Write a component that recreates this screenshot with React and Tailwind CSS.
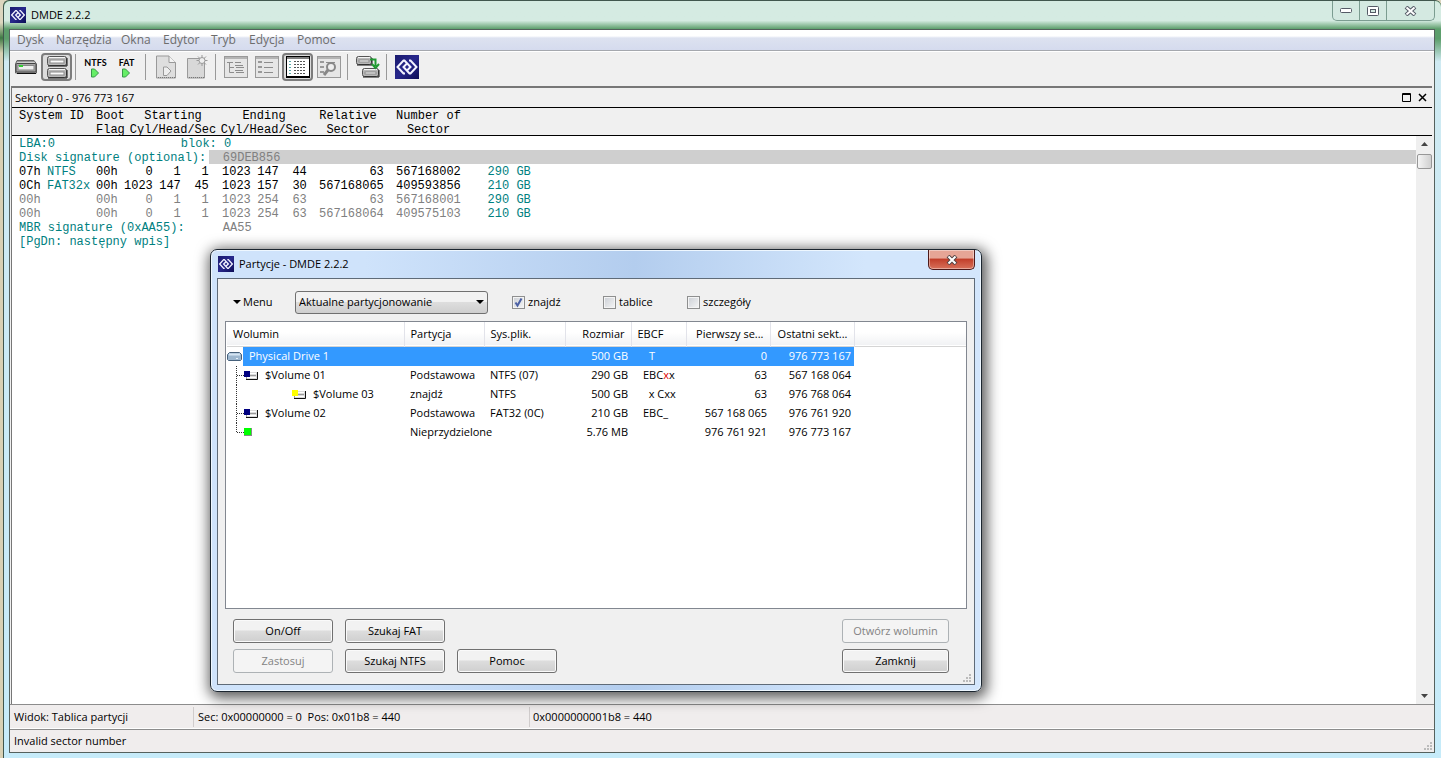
import React from "react";

const menuItems = [
  { label: "Dysk", width: "w-[39px]" },
  { label: "Narzędzia", width: "w-[65px]" },
  { label: "Okna", width: "w-[42px]" },
  { label: "Edytor", width: "w-[48px]" },
  { label: "Tryb", width: "w-[38px]" },
  { label: "Edycja", width: "w-[48px]" },
  { label: "Pomoc", width: "w-[50px]" },
];

const entries = [
  { id: "07h", type: "NTFS", flag: "00h", start: [0, 1, 1], end: [1023, 147, 44], rel: "63", num: "567168002", size: "290 GB" },
  { id: "0Ch", type: "FAT32x", flag: "00h", start: [1023, 147, 45], end: [1023, 157, 30], rel: "567168065", num: "409593856", size: "210 GB" },
  { id: "00h", type: "", flag: "00h", start: [0, 1, 1], end: [1023, 254, 63], rel: "63", num: "567168001", size: "290 GB", dim: true },
  { id: "00h", type: "", flag: "00h", start: [0, 1, 1], end: [1023, 254, 63], rel: "567168064", num: "409575103", size: "210 GB", dim: true },
];

const volumes = [
  { name: "$Volume 01", color: "#000080", part: "Podstawowa", fs: "NTFS (07)", size: "290 GB", flags: ["EBC", "x", "x"], first: "63", last: "567 168 064" },
  { name: "$Volume 03", color: "#ffff00", nested: true, part: "znajdź", fs: "NTFS", size: "500 GB", flags: ["\u00a0 x Cxx"], first: "63", last: "976 768 064" },
  { name: "$Volume 02", color: "#000080", part: "Podstawowa", fs: "FAT32 (0C)", size: "210 GB", flags: ["EBC_"], first: "567 168 065", last: "976 761 920" },
  { name: "", color: "#00ff00", free: true, part: "Nieprzydzielone", fs: "", size: "5.76 MB", flags: [], first: "976 761 921", last: "976 773 167" },
];

const Logo = ({ className }) => (
  <svg viewBox="0 0 24 24" className={className}>
    <defs>
      <linearGradient id="logo" x1="0" y1="0" x2="1" y2="1">
        <stop offset="0" stopColor="#1a1a6e" />
        <stop offset=".5" stopColor="#28288c" />
        <stop offset="1" stopColor="#0c0c55" />
      </linearGradient>
    </defs>
    <rect width="24" height="24" fill="url(#logo)" />
    <g fill="none" stroke="#f4f4ff" strokeWidth="2">
      <path d="M10 18.500 L8.500 18.500 L2.500 12 L8.500 5.500 L9.500 5.500 L15.500 12 L12 15.500" />
      <path d="M14 5.500 L15.500 5.500 L21.500 12 L15.500 18.500 L14.500 18.500 L8.500 12 L12 8.500" />
    </g>
  </svg>
);

const DriveShape = ({ x, y, w = 22, h = 10 }) => (
  <g transform={`translate(${x} ${y})`}>
    <rect x=".5" y=".5" width={w} height={h} rx="2" fill="#b8b8b8" stroke="#555" />
    <path d={`M2 1.500 H${w - 1}`} stroke="#f4f4f4" />
    <rect x="3" y="4" width={w - 5} height={h - 6} fill="#fafafa" stroke="#8a8a8a" />
    <path d={`M1 ${h + 1} H${w + 1} V2`} fill="none" stroke="#111" />
  </g>
);

const DriveIcon = () => (
  <svg width="24" height="16" viewBox="0 0 24 16">
    <path d="M1.500 14 V5 L3 1.500 H20 L22.500 5 V14 Z" fill="#cfcfcf" stroke="#666" />
    <path d="M3 2.500 H20" stroke="#999" />
    <rect x="2" y="4.500" width="20" height="8.500" rx="1" fill="#a8a8a8" stroke="#444" />
    <rect x="4" y="6.500" width="16" height="4.500" fill="#eee" stroke="#888" />
    <rect x="5" y="6" width="4" height="2" fill="#33cc33" />
    <path d="M3 14.500 H22" stroke="#111" strokeWidth="1" />
  </svg>
);

const DrivesIcon = () => (
  <svg width="24" height="24" viewBox="0 0 24 24">
    <DriveShape x="2" y="1" w={19} h={9} />
    <DriveShape x="2" y="13" w={19} h={9} />
  </svg>
);

const FsIcon = ({ label }) => (
  <span className="flex flex-col items-center font-['Lato'] text-[9px] leading-[11px] font-bold text-black">
    {label}
    <svg width="10" height="10" viewBox="0 0 10 10">
      <path d="M1.500 1 H4.500 L8.500 5 L4.500 9 H1.500 Z" fill="#66ee66" stroke="#38984a" />
    </svg>
  </span>
);

const DocIcon = () => (
  <svg width="22" height="24" viewBox="0 0 22 24">
    <path d="M1.500 1 H14 L20.500 7.500 V23 H1.500 Z" fill="#dedede" stroke="#999" />
    <path d="M14 1 V7.500 H20.500" fill="#f4f4f4" stroke="#999" />
    <path d="M8.500 12 H12 L16 16 L12 20.500 H8.500 Z" fill="#eee" stroke="#999" />
    <path d="M3 22.500 H20" stroke="#777" strokeDasharray="1 1" />
  </svg>
);

const NewIcon = () => (
  <svg width="22" height="24" viewBox="0 0 22 24">
    <path d="M1.500 3.500 H18.500 V23 H1.500 Z" fill="#d8d8d8" stroke="#9a9a9a" />
    <path d="M16 0 V11 M10.500 5.500 H21.500 M12 1.500 L20 9.500 M20 1.500 L12 9.500" stroke="#999" />
    <circle cx="16" cy="5.500" r="3" fill="#eee" stroke="#999" />
    <path d="M3 22.500 H18" stroke="#777" strokeDasharray="1 1" />
  </svg>
);

const WindowFrame = ({ active, children }) => (
  <svg width="24" height="24" viewBox="0 0 24 24" className="shrink-0">
    <rect x=".5" y="1.500" width="23" height="21" fill={active ? "#fff" : "#e6e6e6"} stroke={active ? "#000" : "#999"} />
    <path d="M1 3 H23" stroke={active ? "#000" : "#b4b4b4"} strokeWidth={active ? 1 : 2} />
    {active && <path d="M1 22 H23" stroke="#000" strokeWidth="2" />}
    {children}
  </svg>
);

const TreeIcon = () => (
  <WindowFrame>
    <path d="M3 7.500 H9 M5.500 7 V17.500 H10 M5.500 12.500 H10 M11 7.500 H17 M12 12.500 H20 M12 17.500 H20 M11 10.500 H19 M11 15.500 H19" fill="none" stroke="#8c8c8c" />
  </WindowFrame>
);

const ListIcon = () => (
  <WindowFrame>
    <path d="M3 7 H7 M3 12 H7 M3 17 H7" stroke="#999" strokeWidth="2" />
    <path d="M9 7.500 H18 M9 12.500 H18 M9 17.500 H18" stroke="#8c8c8c" />
  </WindowFrame>
);

const HexIcon = () => (
  <WindowFrame active>
    <path d="M4 6 V20" stroke="#55a8a8" strokeWidth="2" strokeDasharray="1 2" />
    <path d="M8 6.500 H20 M8 9.500 H20 M8 12.500 H20 M8 15.500 H20 M8 18.500 H20" stroke="#555" strokeDasharray="2 1" />
  </WindowFrame>
);

const FindIcon = () => (
  <WindowFrame>
    <path d="M3 7 H7 M3 12 H7 M3 17 H7" stroke="#999" strokeWidth="2" />
    <path d="M9 7.500 H18" stroke="#8c8c8c" />
    <circle cx="14" cy="12" r="4" fill="#eee" stroke="#888" strokeWidth="2" />
    <path d="M11 15 L7 20" stroke="#888" strokeWidth="3" />
  </WindowFrame>
);

const CopyDriveIcon = () => (
  <svg width="26" height="24" viewBox="0 0 26 24" className="shrink-0">
    <DriveShape x="1" y="1" w={15} h={8} />
    <DriveShape x="7" y="13" w={16} h={8} />
    <path d="M15 4.500 H20.500 V11 M17 9 L20.500 13 L24 9" fill="none" stroke="#219a32" strokeWidth="2" />
  </svg>
);

const ToolButton = ({ label, active, children }) => (
  <button
    type="button"
    aria-label={label}
    className={
      active
        ? "flex h-7 w-[31px] shrink-0 items-center justify-center rounded-[4px] border-2 border-[#7c7c7c] bg-[#dcdcdc]"
        : "flex h-7 w-[31px] shrink-0 items-center justify-center"
    }
  >
    {children}
  </button>
);

const ToolSeparator = () => <span className="mr-1 ml-[3px] h-[26px] w-px shrink-0 bg-[#999]" />;

const Grip = () => (
  <svg width="10" height="10" viewBox="0 0 10 10" className="shrink-0" fill="#bbb">
    <path d="M7 0h2v2h-2zM4 3h2v2h-2zM7 3h2v2h-2zM1 6h2v2h-2zM4 6h2v2h-2zM7 6h2v2h-2z" />
  </svg>
);

const VolumeIcon = ({ color }) => (
  <svg width="15" height="11" viewBox="0 0 15 11" className="shrink-0">
    <path d="M2 2 H13 V9 H2 Z" fill="#dcdcdc" />
    <path d="M6 3.500 H12 M2 7.500 H12" stroke="#fff" />
    <path d="M6 5.500 H12 M2.500 7 V9" stroke="#999" />
    <path d="M2 9.500 H13.500 V2" fill="none" stroke="#111" />
    <rect x="0" y="1" width="6" height="6" fill={color} />
  </svg>
);

const PushButton = ({ disabled, wide, children }) => (
  <button
    type="button"
    disabled={disabled}
    className={`${wide ? "w-[107px]" : "w-[100px]"} h-6 rounded-[3px] border text-center ${
      disabled
        ? "border-[#adb2b5] bg-[#f4f4f4] text-[#838383]"
        : "border-[#707070] bg-linear-to-b from-[#f2f2f2] from-45% via-[#dddddd] via-50% to-[#cfcfcf] text-black shadow-[inset_0_0_0_1px_#fafafa]"
    }`}
  >
    {children}
  </button>
);

const CheckField = ({ id, label, checked, width }) => (
  <span className={`flex items-center gap-[3px] ${width}`}>
    <span className="relative flex">
      <input
        id={id}
        type="checkbox"
        defaultChecked={checked}
        className="peer size-[13px] appearance-none border border-[#8e8f8f] bg-linear-to-br from-[#cbcfd5] to-[#f6f6f6] shadow-[inset_0_0_0_1px_#f4f4f4]"
      />
      <svg viewBox="0 0 13 13" className="pointer-events-none absolute inset-0 hidden peer-checked:block">
        <path d="M3.500 6.500 L5.500 9.500 L9.500 2.500" fill="none" stroke="#4b60a4" strokeWidth="2" />
      </svg>
    </span>
    <label htmlFor={id}>{label}</label>
  </span>
);

const SectorTable = () => (
  <table className="min-w-0 flex-1 table-fixed border-collapse self-start text-left leading-3 whitespace-pre">
    <colgroup>
      <col className="w-[84px]" />
      <col className="w-[28px]" />
      <col className="w-[28px]" />
      <col className="w-[28px]" />
      <col className="w-[28px]" />
      <col className="w-[42px]" />
      <col className="w-[28px]" />
      <col className="w-[28px]" />
      <col className="w-[77px]" />
      <col className="w-[77px]" />
      <col className="w-[70px]" />
      <col />
    </colgroup>
    <tbody className="[&_td]:p-0 [&_td]:pt-[2px]">
      <tr className="h-[14px] text-[#008080]">
        <td colSpan={4}>
          <span className="pl-[7px]">LBA:0</span>
        </td>
        <td colSpan={8}>blok: 0</td>
      </tr>
      <tr className="h-[14px] text-[#008080]">
        <td colSpan={5}>
          <span className="pl-[7px]">Disk signature (optional):</span>
        </td>
        <td colSpan={7} className="bg-[#cfcfcf] text-[#808080]">
          <span className="pl-[14px]">69DEB856</span>
        </td>
      </tr>
      {entries.map((e, i) => (
        <tr key={i} className={e.dim ? "h-[14px] text-right text-[#808080]" : "h-[14px] text-right text-black"}>
          <td className="text-left">
            <span className="flex pl-[7px]">
              <span className="w-7">{e.id}</span>
              <span className="text-[#008080]">{e.type}</span>
            </span>
          </td>
          <td className="text-left">{e.flag}</td>
          {e.start.map((n, k) => (
            <td key={k}>{n}</td>
          ))}
          {e.end.map((n, k) => (
            <td key={k}>{n}</td>
          ))}
          <td>{e.rel}</td>
          <td>{e.num}</td>
          <td className="text-[#008080]">{e.size}</td>
          <td />
        </tr>
      ))}
      <tr className="h-[14px] text-[#008080]">
        <td colSpan={5}>
          <span className="pl-[7px]">MBR signature (0xAA55):</span>
        </td>
        <td colSpan={7} className="text-[#808080]">
          <span className="pl-[14px]">AA55</span>
        </td>
      </tr>
      <tr className="h-[14px] text-[#008080]">
        <td colSpan={12}>
          <span className="pl-[7px]">[PgDn: następny wpis]</span>
        </td>
      </tr>
    </tbody>
  </table>
);

const VolumeTable = () => (
  <table className="w-full table-fixed border-collapse text-left whitespace-nowrap">
    <colgroup>
      <col className="w-[177px]" />
      <col className="w-[80px]" />
      <col className="w-[81px]" />
      <col className="w-[66px]" />
      <col className="w-[55px]" />
      <col className="w-[84px]" />
      <col className="w-[84px]" />
      <col />
    </colgroup>
    <thead>
      <tr className="h-6 border-b border-[#d5d5d5] bg-linear-to-b from-white from-45% to-[#f1f2f4] [&_th]:border-r [&_th]:border-[#e2e3ea] [&_th]:p-0 [&_th]:px-[6px] [&_th]:font-normal [&_th:last-child]:border-r-0">
        <th>Wolumin</th>
        <th>Partycja</th>
        <th>Sys.plik.</th>
        <th className="text-right">Rozmiar</th>
        <th>EBCF</th>
        <th className="text-right">Pierwszy se...</th>
        <th className="text-right">Ostatni sekt...</th>
        <th />
      </tr>
    </thead>
    <tbody className="[&_td]:p-0">
      <tr className="h-[19px] text-white">
        <td>
          <span className="flex h-[19px] items-center">
            <svg width="16" height="11" viewBox="0 0 16 11" className="shrink-0">
              <path d="M2.500 1.500 H12.500 L14.500 3.500 V8.500 L13.500 9.500 H1.500 L.5 8.500 V3.500 Z" fill="#9db7cf" stroke="#46607a" />
              <path d="M2 3.500 H13" stroke="#d4e4f2" strokeWidth="2" />
              <path d="M9 7.500 H11" stroke="#e4f0fa" />
            </svg>
            <span className="flex h-full flex-1 items-center bg-[#3399ff] pl-[6px]">Physical Drive 1</span>
          </span>
        </td>
        <td className="bg-[#3399ff]" />
        <td className="bg-[#3399ff]" />
        <td className="bg-[#3399ff] text-right"><span className="pr-[3px]">500 GB</span></td>
        <td className="bg-[#3399ff]"><span className="pl-[18px]">T</span></td>
        <td className="bg-[#3399ff] text-right"><span className="pr-[3px]">0</span></td>
        <td className="bg-[#3399ff] text-right"><span className="pr-[3px]">976 773 167</span></td>
        <td />
      </tr>
      {volumes.map((v) => (
        <tr key={v.last + v.part} className="h-[19px]">
          <td>
            <span className="flex h-[19px] items-center">
              <svg width="17" height="19" viewBox="0 0 17 19" className="shrink-0" fill="none" stroke="#333" strokeDasharray="1 1">
                <path d={v.free ? "M9.500 0 V10" : "M9.500 0 V19"} />
                {!v.nested && <path d="M10 9.500 H17" />}
              </svg>
              {v.nested && <span className="w-12 shrink-0" />}
              {v.free ? (
                <span className="size-2 border-r border-b border-[#888] bg-[#00ff00]" />
              ) : (
                <VolumeIcon color={v.color} />
              )}
              <span className="pl-[6px]">{v.name}</span>
            </span>
          </td>
          <td><span className="pl-[6px]">{v.part}</span></td>
          <td><span className="pl-[6px]">{v.fs}</span></td>
          <td className="text-right"><span className="pr-[3px]">{v.size}</span></td>
          <td>
            <span className="pl-3">
              {v.flags.map((f, k) => (
                <span key={k} className={k === 1 ? "text-[#e00000]" : ""}>{f}</span>
              ))}
            </span>
          </td>
          <td className="text-right"><span className="pr-[3px]">{v.first}</span></td>
          <td className="text-right"><span className="pr-[3px]">{v.last}</span></td>
          <td />
        </tr>
      ))}
    </tbody>
  </table>
);

const PartitionsDialog = () => (
  <section
    aria-label="Partycje"
    className="absolute top-[249px] left-[210px] flex h-[443px] w-[772px] flex-col rounded-[7px] border border-[#1c2630] bg-linear-to-r from-[#cfe3fb] from-20% via-[#b3cdee] via-55% to-[#d3e6fc] to-85% px-[6px] pb-[6px] text-black shadow-[inset_0_0_0_1px_#eef7ff,2px_3px_14px_3px_rgba(0,0,0,0.65)]"
  >
    <header className="flex h-7 shrink-0 items-start justify-between">
      <h2 className="flex h-7 items-center gap-[5px] pl-px">
        <Logo className="size-4" />
        Partycje - DMDE 2.2.2
      </h2>
      <button
        type="button"
        aria-label="Zamknij okno"
        className="flex h-5 w-[47px] items-center justify-center rounded-b-[5px] border border-t-0 border-[#4d1a1a] bg-linear-to-b from-[#e6a596] from-40% via-[#c2402c] via-50% to-[#d8705a] shadow-[inset_0_0_0_1px_rgba(255,255,255,0.4)]"
      >
        <svg width="12" height="10" viewBox="0 0 12 10">
          <path d="M2 1 L10 9 M10 1 L2 9" stroke="#544" strokeWidth="4" />
          <path d="M2.500 1.500 L9.500 8.500 M9.500 1.500 L2.500 8.500" stroke="#fff" strokeWidth="2" />
        </svg>
      </button>
    </header>
    <div className="flex min-h-0 flex-1 flex-col border border-[#5f6b78] bg-[#f0f0f0] px-[7px] pt-[11px]">
      <div className="flex h-6 shrink-0 items-center pl-2">
        <button type="button" className="flex w-[62px] items-center gap-[2px]">
          <svg width="8" height="4" viewBox="0 0 8 4">
            <path d="M0 0h8l-4 4z" />
          </svg>
          Menu
        </button>
        <span className="relative mr-6 flex w-[193px] items-center">
          <select
            aria-label="Partycjonowanie"
            className="h-[23px] w-full appearance-none rounded-[3px] border border-[#707070] bg-linear-to-b from-[#f2f2f2] from-45% via-[#dddddd] via-50% to-[#cfcfcf] pl-[3px]"
          >
            <option>Aktualne partycjonowanie</option>
          </select>
          <svg width="8" height="4" viewBox="0 0 8 4" className="pointer-events-none absolute right-1">
            <path d="M0 0h8l-4 4z" />
          </svg>
        </span>
        <CheckField id="find" label="znajdź" checked width="w-[91px]" />
        <CheckField id="tables" label="tablice" width="w-[84px]" />
        <CheckField id="details" label="szczegóły" width="w-[90px]" />
      </div>
      <div className="mt-[7px] h-[288px] shrink-0 border border-[#828790] bg-white pl-px">
        <VolumeTable />
      </div>
      <div className="flex pt-[10px] pr-[10px] pl-2">
        <div className="grid grid-cols-3 gap-x-3 gap-y-[6px]">
          <PushButton>On/Off</PushButton>
          <PushButton>Szukaj FAT</PushButton>
          <span />
          <PushButton disabled>Zastosuj</PushButton>
          <PushButton>Szukaj NTFS</PushButton>
          <PushButton>Pomoc</PushButton>
        </div>
        <div className="mr-2 ml-auto grid gap-y-[6px]">
          <PushButton wide disabled>Otwórz wolumin</PushButton>
          <PushButton wide>Zamknij</PushButton>
        </div>
      </div>
      <div className="-mr-[5px] flex flex-1 items-end justify-end">
        <Grip />
      </div>
    </div>
  </section>
);

const WindowControls = () => (
  <div className="flex h-5 w-[103px] rounded-b-[5px] border border-t-0 border-[#7b9c90] bg-[#d4e9e1]">
    <button type="button" aria-label="Minimalizuj" className="flex flex-1 items-center justify-center border-r border-[#7b9c90]">
      <svg width="12" height="6" viewBox="0 0 12 6">
        <rect x=".5" y=".5" width="11" height="4" rx="1" fill="#fff" stroke="#555a66" />
      </svg>
    </button>
    <button type="button" aria-label="Maksymalizuj" className="flex flex-1 items-center justify-center border-r border-[#7b9c90]">
      <svg width="12" height="10" viewBox="0 0 12 10">
        <rect x=".5" y=".5" width="11" height="9" rx="1" fill="#fff" stroke="#555a66" />
        <rect x="3.500" y="3.500" width="5" height="3" fill="#d4e9e1" stroke="#555a66" />
      </svg>
    </button>
    <button type="button" aria-label="Zamknij" className="flex w-[47px] items-center justify-center">
      <svg width="13" height="10" viewBox="0 0 13 10">
        <path d="M2 1 L11 9 M11 1 L2 9" stroke="#555a66" strokeWidth="4" />
        <path d="M2.500 1.500 L10.500 8.500 M10.500 1.500 L2.500 8.500" stroke="#fff" strokeWidth="2" />
      </svg>
    </button>
  </div>
);

const App = () => {
  return (
    <div className="relative flex h-screen overflow-hidden bg-linear-to-b from-[#dcd6bf] from-3% via-[#3d7a45] via-5% to-[#d8d0b4] to-7% pl-[3px] font-['Open_Sans',sans-serif] text-[11px] leading-4 text-black">
      <main className="flex min-w-0 flex-1 flex-col rounded-t-[6px] border-t border-l border-[#41574e] bg-linear-to-b from-[#5c9e6c] from-5% via-[#cfeaf2] via-8% to-[#c6ebf9] pr-[6px] pb-[5px]">
        <header className="-mr-[6px] flex h-7 shrink-0 items-start justify-between rounded-t-[6px] bg-linear-to-b from-[#d5ebe2] from-70% to-[#5c9e6c] pr-[6px] pl-[6px]">
          <h1 className="flex h-7 items-center gap-[5px]">
            <Logo className="size-4" />
            DMDE 2.2.2
          </h1>
          <WindowControls />
        </header>

        <div className="ml-[5px] flex min-h-0 flex-1 flex-col border border-[#55615d] bg-[#f0f0f0]">
          <nav className="flex h-[21px] shrink-0 items-center border-b border-[#a5a8ae] bg-linear-to-b from-white from-30% via-[#dde2f0] via-40% to-[#d5dbee] pl-[7px] text-xs text-[#6d6d6d]">
            {menuItems.map((m) => (
              <button key={m.label} type="button" className={`${m.width} text-left`}>
                {m.label}
              </button>
            ))}
          </nav>

          <div className="flex h-[35px] shrink-0 items-center border-t border-white pb-1">
            <ToolButton label="Dysk"><DriveIcon /></ToolButton>
            <ToolButton label="Dyski" active><DrivesIcon /></ToolButton>
            <ToolSeparator />
            <ToolButton label="NTFS"><FsIcon label="NTFS" /></ToolButton>
            <ToolButton label="FAT"><FsIcon label="FAT" /></ToolButton>
            <ToolSeparator />
            <ToolButton label="Otwórz"><DocIcon /></ToolButton>
            <ToolButton label="Nowy"><NewIcon /></ToolButton>
            <ToolSeparator />
            <ToolButton label="Drzewo"><TreeIcon /></ToolButton>
            <ToolButton label="Lista"><ListIcon /></ToolButton>
            <ToolButton label="Edytor" active><HexIcon /></ToolButton>
            <ToolButton label="Szukaj"><FindIcon /></ToolButton>
            <ToolSeparator />
            <ToolButton label="Kopiuj"><CopyDriveIcon /></ToolButton>
            <ToolSeparator />
            <ToolButton label="O programie"><Logo className="size-6" /></ToolButton>
          </div>

          <section className="mr-[2px] ml-px flex min-h-0 flex-1 flex-col border-t-2 border-l border-[#777]">
            <div className="flex h-[19px] shrink-0 items-center justify-between pr-[5px] pl-[3px]">
              <h2>Sektory 0 - 976 773 167</h2>
              <span className="flex gap-[7px]">
                <button type="button" aria-label="Powiększ">
                  <svg width="9" height="9" viewBox="0 0 9 9">
                    <path d="M.5 .5 H8.500 V8.500 H.5 Z M0 1.500 H9" fill="none" stroke="#000" />
                  </svg>
                </button>
                <button type="button" aria-label="Zamknij panel">
                  <svg width="9" height="9" viewBox="0 0 9 9">
                    <path d="M1 1 L8 8 M8 1 L1 8" stroke="#000" strokeWidth="1.500" />
                  </svg>
                </button>
              </span>
            </div>
            <div className="flex h-[29px] shrink-0 border-y border-black pt-px pl-[7px] text-center font-['Liberation_Mono',monospace] text-xs leading-[14px] whitespace-nowrap">
              <div className="w-[77px] text-left">System ID</div>
              <div className="flex w-[35px] flex-col text-left">
                <span>Boot</span>
                <span>Flag</span>
              </div>
              <div className="mr-[7px] flex w-[84px] flex-col items-center">
                <span>Starting</span>
                <span>Cyl/Head/Sec</span>
              </div>
              <div className="mr-[14px] flex w-[84px] flex-col items-center">
                <span>Ending</span>
                <span>Cyl/Head/Sec</span>
              </div>
              <div className="mr-[21px] flex w-[56px] flex-col items-center">
                <span>Relative</span>
                <span>Sector</span>
              </div>
              <div className="flex w-[63px] flex-col items-center">
                <span>Number of</span>
                <span>Sector</span>
              </div>
            </div>
            <div className="flex min-h-0 flex-1 bg-white font-['Liberation_Mono',monospace] text-xs leading-[14px]">
              <SectorTable />
              <div className="flex w-4 shrink-0 flex-col items-center bg-[#efefef] py-[6px]">
                <svg width="7" height="4" viewBox="0 0 7 4">
                  <path d="M0 4h7l-3.500-4z" fill="#444" />
                </svg>
                <span className="mt-2 h-[15px] w-[15px] shrink-0 rounded-[2px] border border-[#979797] bg-linear-to-r from-[#f5f5f5] to-[#d0d0d0]" />
                <svg width="7" height="4" viewBox="0 0 7 4" className="mt-auto">
                  <path d="M0 0h7l-3.500 4z" fill="#444" />
                </svg>
              </div>
            </div>
          </section>

          <footer className="shrink-0 bg-[#f0eded]">
            <div className="flex h-[25px] items-center border-t border-b border-t-[#8c8c8c] border-b-white pl-1">
              <span className="w-[180px] border-r border-[#d0cccc] leading-5">Widok: Tablica partycji</span>
              <span className="w-[336px] border-r border-[#d0cccc] pl-1 leading-5 whitespace-pre">Sec: 0x00000000 = 0  Pos: 0x01b8 = 440</span>
              <span className="pl-[3px]">0x0000000001b8 = 440</span>
            </div>
            <div className="flex h-[23px] items-center justify-between border-t border-[#8c8c8c] pr-px pl-1">
              <span>Invalid sector number</span>
              <span className="self-end"><Grip /></span>
            </div>
          </footer>
        </div>
      </main>
      <PartitionsDialog />
    </div>
  );
};

export default App;
